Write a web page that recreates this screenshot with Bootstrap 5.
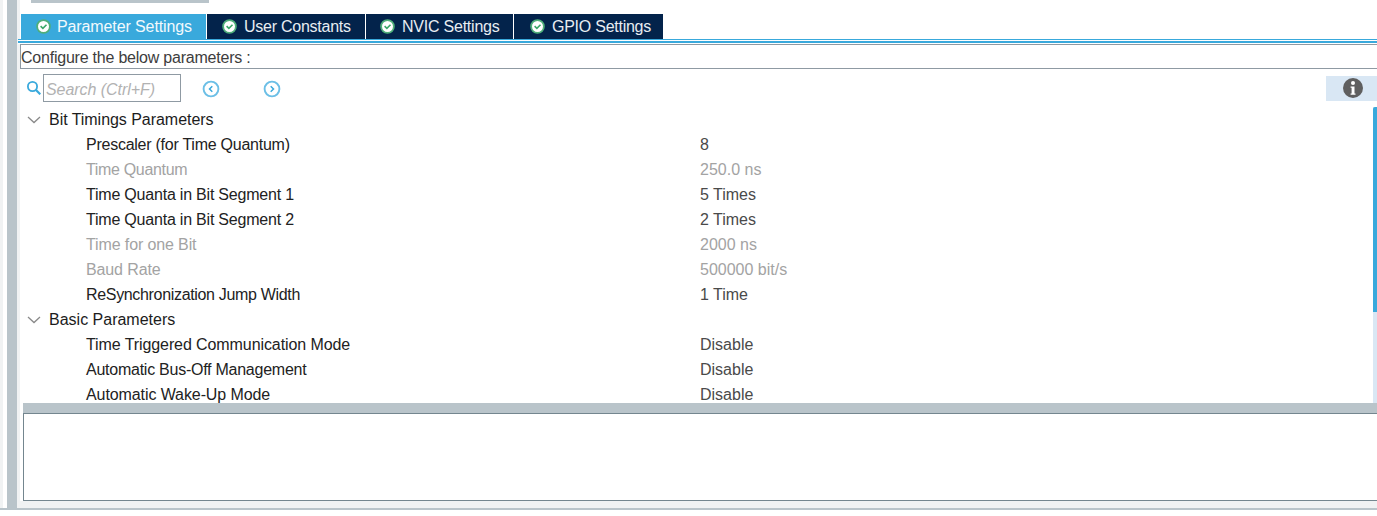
<!DOCTYPE html>
<html lang="en">
<head>
<meta charset="utf-8">
<title>Parameter Settings</title>
<link href="https://cdn.jsdelivr.net/npm/bootstrap@5.3.0/dist/css/bootstrap.min.css" rel="stylesheet">
<style>
html,body{height:516px;overflow:hidden;background:#fff;}
body{font-family:"Liberation Sans",Arial,sans-serif;font-size:16px;color:#2b2b2b;}
.shell{height:510px;display:flex;background:#fff;border-bottom:2px solid #b9c4ca;}
.rail-a{width:3px;background:#f0f2f3;}
.rail-b{width:4px;background:#fff;}
.rail-c{width:10px;background:#b9c4ca;}
.rail-d{width:3px;background:#f0f2f3;}
.main{flex:1;min-width:0;display:flex;flex-direction:column;}
.topbar{height:3px;width:178px;margin-left:11px;background:#b9c4ca;}
.tabs{display:flex;gap:1px;margin-top:11px;height:25px;margin-left:1px;}
.tabx{display:flex;align-items:center;background:#03234b;color:#e8edf2;height:25px;white-space:nowrap;}
.tabx.on{background:#39a9dc;color:#f2f9fd;}
.tabx svg{flex:none;}
.tab1{width:185px;padding-left:15px;gap:6px;letter-spacing:-.11px;}
.tab2{width:158px;padding-left:15px;gap:7px;letter-spacing:-.25px;}
.tab3{width:147px;padding-left:14px;gap:7px;letter-spacing:-.23px;}
.tab4{width:149px;padding-left:16px;gap:7px;letter-spacing:-.25px;}
.rule1{height:2px;border-top:1px solid #39a9dc;margin-left:-2px;background:#fff;}
.rule2{height:3px;border-top:2px solid #39a9dc;margin-left:-2px;background:#fff;}
.desc{box-sizing:content-box;height:23px;border-left:1px solid #8f9aa3;border-top:1px solid #8f9aa3;border-bottom:1px solid #8f9aa3;line-height:26px;color:#3d3d3d;white-space:nowrap;letter-spacing:-.22px;overflow:hidden;}
.tools{height:38px;display:flex;align-items:center;}
.find{margin-left:7px;margin-right:2px;flex:none;}
.sbox{width:138px;height:28px;border:1px solid #8f9aa3;color:#b2b2b2;font-style:italic;padding-left:2px;line-height:29px;letter-spacing:-.05px;white-space:nowrap;overflow:hidden;}
.prev{margin-left:21px;flex:none;position:relative;top:1px;}
.next{margin-left:43px;flex:none;position:relative;top:1px;}
.infobox{margin-left:auto;width:51px;height:25px;background:#d9e7f4;display:flex;align-items:center;justify-content:center;padding-left:3px;}
.treezone{height:296px;position:relative;overflow:hidden;margin-left:3px;}
.rowx{height:25px;display:flex;align-items:center;white-space:nowrap;color:#222;}
.rowx .nm{width:614px;margin-left:63px;flex:none;}
.rowx .vl{color:#4a4a4a;}
.rowx.off .nm,.rowx.off .vl{color:#a3a3a3;}
.grp{color:#1c1c1c;}
.grp svg{margin-left:4px;margin-right:8px;flex:none;}
.sp1{letter-spacing:-.04px;}
.sp2{letter-spacing:-.09px;}
.sp3{letter-spacing:-.12px;}
.sp4{letter-spacing:-.21px;}
.sp5{letter-spacing:-.25px;}
.sp6{letter-spacing:-.33px;}
.sbar{position:absolute;right:0;top:0;bottom:0;width:4px;background:#d9e7f4;}
.sthumb{height:205px;background:#39a9dc;border-radius:2px 0 0 0;}
.split{height:11px;background:#b9c4ca;border-bottom:1px solid #74868f;margin-left:3px;}
.lower{height:87px;border-left:1px solid #74868f;border-bottom:1px solid #74868f;margin-left:3px;background:#fff;}
.foot2{flex:1;background:#f0f2f3;}
</style>
</head>
<body>
<svg width="0" height="0" class="position-absolute"><defs>
<symbol id="okmark" viewBox="0 0 15 15"><circle cx="7.5" cy="7.5" r="6.4" fill="#fff" stroke="#4fae7a" stroke-width="1.8"/><path d="M4.6 7.1l2.3 2.3 3.6-3.6" fill="none" stroke="#3aa868" stroke-width="1.6"/></symbol>
<symbol id="fold" viewBox="0 0 14 8"><path d="M1 1l6 5.5L13 1" fill="none" stroke="#8a8a8a" stroke-width="1.3"/></symbol>
</defs></svg>
<div class="shell">
  <div class="rail-a"></div><div class="rail-b"></div><div class="rail-c"></div><div class="rail-d"></div>
  <div class="main">
    <div class="topbar"></div>
    <div class="tabs">
      <div class="tabx on tab1"><svg width="15" height="15"><use href="#okmark"/></svg>Parameter Settings</div>
      <div class="tabx tab2"><svg width="15" height="15"><use href="#okmark"/></svg>User Constants</div>
      <div class="tabx tab3"><svg width="15" height="15"><use href="#okmark"/></svg>NVIC Settings</div>
      <div class="tabx tab4"><svg width="15" height="15"><use href="#okmark"/></svg>GPIO Settings</div>
    </div>
    <div class="rule1"></div>
    <div class="rule2"></div>
    <div class="desc">Configure the below parameters :</div>
    <div class="tools">
      <svg class="find" width="14" height="14" viewBox="0 0 14 14"><circle cx="5.5" cy="5.5" r="4.6" fill="none" stroke="#39a9dc" stroke-width="1.8"/><path d="M9 9l4.3 4.3" stroke="#39a9dc" stroke-width="2.2"/></svg>
      <div class="sbox">Search (Ctrl+F)</div>
      <svg class="prev" width="18" height="18" viewBox="0 0 18 18"><circle cx="9" cy="9" r="7.4" fill="#fff" stroke="#6cbfe6" stroke-width="1.9"/><path d="M10.3 6.2L7.5 9l2.8 2.8" fill="none" stroke="#39a9dc" stroke-width="1.5"/></svg>
      <svg class="next" width="18" height="18" viewBox="0 0 18 18"><circle cx="9" cy="9" r="7.4" fill="#fff" stroke="#6cbfe6" stroke-width="1.9"/><path d="M7.7 6.2L10.5 9l-2.8 2.8" fill="none" stroke="#39a9dc" stroke-width="1.5"/></svg>
      <div class="infobox"><svg width="20" height="20" viewBox="0 0 20 20"><circle cx="10" cy="10" r="10" fill="#5f5f5f"/><circle cx="10" cy="5" r="2" fill="#fff"/><path d="M7.6 8.4h3.9v7h1v1.4H7.6v-1.4h1v-5.6h-1z" fill="#fff"/></svg></div>
    </div>
    <div class="treezone">
      <div class="sbar"><div class="sthumb"></div></div>
      <div class="rowx grp sp1"><svg width="14" height="8"><use href="#fold"/></svg>Bit Timings Parameters</div>
      <div class="rowx"><span class="nm sp5">Prescaler (for Time Quantum)</span><span class="vl">8</span></div>
      <div class="rowx off"><span class="nm sp6">Time Quantum</span><span class="vl">250.0 ns</span></div>
      <div class="rowx"><span class="nm sp4">Time Quanta in Bit Segment 1</span><span class="vl">5 Times</span></div>
      <div class="rowx"><span class="nm sp4">Time Quanta in Bit Segment 2</span><span class="vl">2 Times</span></div>
      <div class="rowx off"><span class="nm sp3">Time for one Bit</span><span class="vl">2000 ns</span></div>
      <div class="rowx off"><span class="nm sp3">Baud Rate</span><span class="vl">500000 bit/s</span></div>
      <div class="rowx"><span class="nm sp6">ReSynchronization Jump Width</span><span class="vl">1 Time</span></div>
      <div class="rowx grp"><svg width="14" height="8"><use href="#fold"/></svg>Basic Parameters</div>
      <div class="rowx"><span class="nm sp2">Time Triggered Communication Mode</span><span class="vl">Disable</span></div>
      <div class="rowx"><span class="nm sp5">Automatic Bus-Off Management</span><span class="vl">Disable</span></div>
      <div class="rowx"><span class="nm sp2">Automatic Wake-Up Mode</span><span class="vl">Disable</span></div>
    </div>
    <div class="split"></div>
    <div class="lower"></div>
    <div class="foot2"></div>
  </div>
</div>
</body>
</html>
